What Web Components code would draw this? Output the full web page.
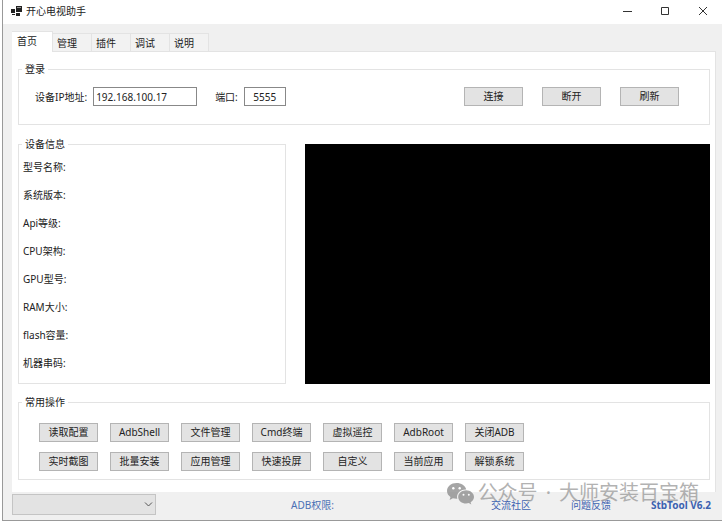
<!DOCTYPE html>
<html lang="zh-CN">
<head>
<meta charset="utf-8">
<title>开心电视助手</title>
<style>
  body {
    margin: 0;
    background: #fff;
    color: #222;
    font: 10px/14px "Noto Sans", "Noto Sans CJK SC", sans-serif;
  }
</style>
</head>
<body>
<app-window></app-window>

<script>
// Caption bar with icon, title and window buttons
class TitleBar extends HTMLElement {
  constructor() {
    super();
    this.attachShadow({ mode: 'open' });
  }

  connectedCallback() {
    this.shadowRoot.innerHTML = `
      <style>
        :host {
          display: flex;
          align-items: center;
          height: 24px;
          padding-left: 8px;
          background: #fff;
        }
        .title { flex: 1; padding: 0 0 2px 4px; }
        button {
          width: 38px;
          height: 24px;
          padding: 0 0 3px;
          border: 0;
          background: none;
        }
        svg { display: block; }
        button svg { margin: 0 auto; }
        .icon { padding-bottom: 3px; }
      </style>
      <svg class="icon" width="11" height="10" viewBox="0 0 11 10" fill="#222">
        <rect x="0" y="3" width="4" height="4"/>
        <rect x="5" y="0" width="6" height="6"/>
        <rect x="6" y="1" width="4" height="1" fill="#999"/>
        <rect x="1" y="8" width="3" height="1"/>
        <rect x="5" y="7" width="4" height="3"/>
      </svg>
      <span class="title"><slot></slot></span>
      <button aria-label="最小化"><svg width="10" height="10" stroke="#333"><path d="M1 5.5h9"/></svg></button>
      <button aria-label="最大化"><svg width="10" height="10" fill="none" stroke="#333"><path d="M1.500 1.500h7v7h-7z"/></svg></button>
      <button aria-label="关闭"><svg width="10" height="10" stroke="#333"><path d="M1 1l8 8M9 1l-8 8"/></svg></button>
    `;
  }
}

// Tab strip plus the page below it
class TabView extends HTMLElement {
  constructor() {
    super();
    this.attachShadow({ mode: 'open' });
  }

  connectedCallback() {
    const tabs = this.getAttribute('tabs').split(',');
    this.shadowRoot.innerHTML = `
      <style>
        :host { display: block; }
        .tabs { display: flex; align-items: flex-end; }
        button {
          width: 39px;
          height: 18px;
          padding: 0 4px;
          border: 1px solid #e3e3e3;
          border-left: 0;
          border-bottom: 0;
          background: #f2f2f2;
          font: inherit;
          color: inherit;
          text-align: left;
          white-space: nowrap;
        }
        button[aria-selected=true] {
          position: relative;
          width: 41px;
          height: 21px;
          margin-bottom: -1px;
          padding: 0 5px 3px;
          background: #fff;
        }
        .page {
          padding: 10px 5px 12px 6px;
          background: #fff;
          border-top: 1px solid #e3e3e3;
          border-right: 1px solid #e3e3e3;
        }
      </style>
      <div class="tabs" role="tablist">
        ${tabs.map((t, i) => `<button role="tab" aria-selected="${i === 0}">${t}</button>`).join('')}
      </div>
      <div class="page" role="tabpanel"><slot></slot></div>
    `;
  }
}

class GroupBox extends HTMLElement {
  constructor() {
    super();
    this.attachShadow({ mode: 'open' });
  }

  connectedCallback() {
    this.shadowRoot.innerHTML = `
      <style>
        :host { display: block; }
        fieldset {
          margin: 0;
          min-width: 0;
          padding: 0;
          border: 1px solid #e3e3e3;
        }
        legend { margin-left: 3px; padding: 0 3px; }
        .content { padding: var(--group-padding, 0); }
      </style>
      <fieldset>
        <legend>${this.getAttribute('caption')}</legend>
        <div class="content"><slot></slot></div>
      </fieldset>
    `;
  }
}

class TextField extends HTMLElement {
  constructor() {
    super();
    this.attachShadow({ mode: 'open' });
  }

  connectedCallback() {
    this.shadowRoot.innerHTML = `
      <style>
        :host { display: flex; align-items: center; gap: 6px; }
        label { white-space: nowrap; }
        input {
          box-sizing: border-box;
          width: var(--field-width, 104px);
          height: 19px;
          padding: 0 2px;
          border: 1px solid #888;
          background: #fff;
          font: inherit;
          color: inherit;
          text-align: var(--field-align, left);
        }
      </style>
      <label for="field">${this.getAttribute('label')}</label>
      <input id="field" value="${this.getAttribute('value')}">
    `;
  }
}

class PushButton extends HTMLElement {
  constructor() {
    super();
    this.attachShadow({ mode: 'open' });
  }

  connectedCallback() {
    this.shadowRoot.innerHTML = `
      <style>
        :host { display: block; }
        button {
          display: block;
          width: 59px;
          height: 19px;
          padding: 0;
          border: 1px solid #b4b4b4;
          background: #e3e3e3;
          font: inherit;
          line-height: 17px;
          color: inherit;
          white-space: nowrap;
        }
      </style>
      <button><slot></slot></button>
    `;
  }
}

class StatusBar extends HTMLElement {
  constructor() {
    super();
    this.attachShadow({ mode: 'open' });
  }

  connectedCallback() {
    this.shadowRoot.innerHTML = `
      <style>
        :host {
          display: flex;
          align-items: center;
          padding: 2px 5px 5px 0;
          color: #4a6fb5;
        }
        .device { position: relative; width: 144px; }
        select {
          display: block;
          width: 100%;
          height: 21px;
          border: 1px solid #c4c4c4;
          border-radius: 0;
          background: #e3e3e3;
          appearance: none;
        }
        .device svg { position: absolute; right: 3px; top: 7px; }
        .root { flex: 1; padding-left: 135px; }
        nav { display: flex; gap: 40px; }
        a { color: #3c62b0; text-decoration: none; }
        a.version { font-weight: bold; }
      </style>
      <div class="device">
        <select aria-label="设备"></select>
        <svg width="9" height="7" fill="none" stroke="#555"><path d="M1 1.500l3.500 3.500L8 1.500"/></svg>
      </div>
      <span class="root">ADB权限:</span>
      <nav>
        <a href="#community">交流社区</a>
        <a href="#feedback">问题反馈</a>
        <a class="version" href="#about">StbTool V6.2</a>
      </nav>
    `;
  }
}

// Channel mark laid over the lower right corner
class ChannelMark extends HTMLElement {
  constructor() {
    super();
    this.attachShadow({ mode: 'open' });
  }

  connectedCallback() {
    this.shadowRoot.innerHTML = `
      <style>
        :host {
          position: absolute;
          right: 23px;
          bottom: 15px;
          display: flex;
          align-items: center;
          gap: 4px;
          font-size: 20px;
          line-height: 24px;
          color: #999;
          opacity: .75;
          pointer-events: none;
          white-space: nowrap;
        }
      </style>
      <svg width="27" height="23" viewBox="0 0 27 23">
        <path fill="#888" d="M9.500 1C4.300 1 0 4.500 0 8.900c0 2.500 1.400 4.600 3.500 6.100l-.9 2.900 3.300-1.700c1.200.3 2.300.5 3.600.5h.8c-1.400-5 2.900-9.500 8.900-9.300C18.300 3.600 14.300 1 9.500 1z"/>
        <path fill="#888" d="M27 14.900c0-3.700-3.700-6.600-7.900-6.600s-7.900 2.900-7.900 6.600 3.600 6.600 7.900 6.600c.9 0 1.800-.2 2.700-.4l2.500 1.400-.7-2.300c2-1.300 3.400-3.100 3.400-5.300z"/>
        <g fill="#fff"><circle cx="6.300" cy="6.300" r="1.200"/><circle cx="12.700" cy="6.300" r="1.200"/><circle cx="16.500" cy="12.800" r="1"/><circle cx="21.800" cy="12.800" r="1"/></g>
      </svg>
      <div><slot></slot></div>
    `;
  }
}

class AppWindow extends HTMLElement {
  constructor() {
    super();
    this.attachShadow({ mode: 'open' });
  }

  connectedCallback() {
    const info = ['型号名称', '系统版本', 'Api等级', 'CPU架构', 'GPU型号', 'RAM大小', 'flash容量', '机器串码'];
    const actions = [
      '读取配置', 'AdbShell', '文件管理', 'Cmd终端', '虚拟遥控', 'AdbRoot', '关闭ADB',
      '实时截图', '批量安装', '应用管理', '快速投屏', '自定义', '当前应用', '解锁系统',
    ];
    this.shadowRoot.innerHTML = `
      <style>
        :host {
          position: relative;
          display: block;
          margin: 0 5px 0 2px;
          border-left: 1px solid #999;
          border-bottom: 1px solid #999;
          background: #f0f0f0;
        }
        main { padding: 7px 6px 0 9px; }
        .login { --group-padding: 11px 30px 18px 16px; }
        .fields { display: flex; align-items: center; gap: 18px; }
        .port { --field-width: 42px; --field-align: center; }
        .buttons { display: flex; gap: 19px; margin-left: auto; }
        .middle {
          display: grid;
          grid-template-columns: 268px 1fr;
          gap: 19px;
          margin: 12px 0 11px;
        }
        .info { --group-padding: 9px 4px 13px; }
        ul {
          display: grid;
          gap: 14px;
          margin: 0;
          padding: 0;
          list-style: none;
        }
        .screen { margin-top: 7px; background: #000; }
        .actions { --group-padding: 14px 20px 8px; }
        .grid {
          display: grid;
          grid-template-columns: repeat(7, 59px);
          gap: 10px 12px;
        }
        .dot { padding: 0 8px; }
      </style>
      <title-bar>开心电视助手</title-bar>
      <main>
        <tab-view tabs="首页,管理,插件,调试,说明">
          <group-box class="login" caption="登录">
            <div class="fields">
              <text-field label="设备IP地址:" value="192.168.100.17"></text-field>
              <text-field class="port" label="端口:" value="5555"></text-field>
              <div class="buttons">
                <push-button>连接</push-button>
                <push-button>断开</push-button>
                <push-button>刷新</push-button>
              </div>
            </div>
          </group-box>
          <div class="middle">
            <group-box class="info" caption="设备信息">
              <ul>${info.map((name) => `<li>${name}:</li>`).join('')}</ul>
            </group-box>
            <div class="screen"></div>
          </div>
          <group-box class="actions" caption="常用操作">
            <div class="grid">${actions.map((name) => `<push-button>${name}</push-button>`).join('')}</div>
          </group-box>
        </tab-view>
        <status-bar></status-bar>
      </main>
      <channel-mark>公众号<span class="dot">·</span>大师安装百宝箱</channel-mark>
    `;
  }
}

customElements.define('title-bar', TitleBar);
customElements.define('tab-view', TabView);
customElements.define('group-box', GroupBox);
customElements.define('text-field', TextField);
customElements.define('push-button', PushButton);
customElements.define('status-bar', StatusBar);
customElements.define('channel-mark', ChannelMark);
customElements.define('app-window', AppWindow);
</script>
</body>
</html>
